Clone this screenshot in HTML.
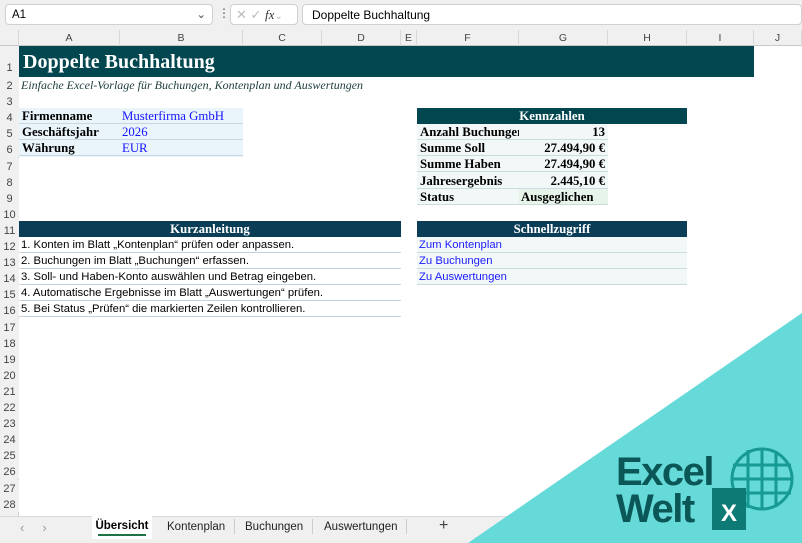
<!DOCTYPE html>
<html><head><meta charset="utf-8"><style>
*{margin:0;padding:0;box-sizing:border-box}
body{width:802px;height:543px;overflow:hidden;background:#fff;font-family:"Liberation Sans",sans-serif;position:relative}
.a{position:absolute}
.serif{font-family:"Liberation Serif",serif}
.rh{position:absolute;left:0;width:19px;text-align:center;font-size:11px;color:#444;background:#f0f0f0}
.ch{position:absolute;top:30px;height:16px;font-size:10.5px;color:#444;text-align:center;line-height:16px;border-right:1px solid #d8d8d8}
.row{position:absolute;height:16px;line-height:16px;font-size:12px;white-space:nowrap;overflow:hidden}
.row.serif{font-size:12.8px}
.k{font-size:11.3px!important}
</style></head><body>
<div class="a" style="left:0;top:0;width:802px;height:30px;background:#f0f0f0"></div>
<div class="a" style="left:5px;top:4px;width:208px;height:21px;background:#fff;border:1px solid #d0d0d0;border-radius:4px;font-size:11.5px;line-height:20px;padding-left:6px">A1<span style="position:absolute;right:6px;top:0;color:#555">⌄</span></div>
<div class="a" style="left:218px;top:6px;font-size:12px;color:#555">⋮</div>
<div class="a" style="left:230px;top:4px;width:68px;height:21px;background:#fff;border:1px solid #d0d0d0;border-radius:4px;font-size:13px;line-height:20px;color:#bbb;padding-left:5px">✕ ✓ <i style="color:#333;font-family:'Liberation Serif',serif">fx</i><span style="font-size:10px">⌄</span></div>
<div class="a" style="left:302px;top:4px;width:500px;height:21px;background:#fff;border:1px solid #d0d0d0;border-radius:4px;font-size:12px;line-height:20px;padding-left:9px">Doppelte Buchhaltung</div>
<div class="a" style="left:0;top:30px;width:802px;height:16px;background:#f0f0f0;border-bottom:1px solid #c8c8c8"></div>
<div class="ch" style="left:0;width:19px"></div>
<div class="ch" style="left:19px;width:101px">A</div>
<div class="ch" style="left:120px;width:123px">B</div>
<div class="ch" style="left:243px;width:79px">C</div>
<div class="ch" style="left:322px;width:79px">D</div>
<div class="ch" style="left:401px;width:16px">E</div>
<div class="ch" style="left:417px;width:102px">F</div>
<div class="ch" style="left:519px;width:89px">G</div>
<div class="ch" style="left:608px;width:79px">H</div>
<div class="ch" style="left:687px;width:67px">I</div>
<div class="ch" style="left:754px;width:48px">J</div>
<div class="a" style="left:0;top:46px;width:19px;height:470px;background:#f0f0f0;border-right:1px solid #d0d0d0"></div>
<div class="rh" style="top:46px;height:31px;line-height:44px">1</div>
<div id="rows"></div>
<script>
var h='';for(var i=2;i<=28;i++){var t=77+(i-2)*16.1;h+='<div class="rh" style="top:'+t+'px;height:16px;line-height:18px">'+i+'</div>';}
document.getElementById('rows').innerHTML=h;
</script>
<div class="a serif" style="left:19px;top:46px;width:735px;height:31px;background:#02474f;color:#fff;font-weight:bold;font-size:20px;line-height:32px;padding-left:4px">Doppelte Buchhaltung</div>
<div class="row serif" style="left:21px;top:77px;font-style:italic;font-size:12px!important;color:#1d3b3b">Einfache Excel-Vorlage für Buchungen, Kontenplan und Auswertungen</div>
<div class="a" style="left:19px;top:108px;width:224px;height:49px;background:#eaf4fb"></div>
<div class="row serif" style="left:19px;top:108px;width:224px;border-bottom:1px solid #c8d8e0;font-weight:bold;padding-left:3px">Firmenname<span style="position:absolute;left:103px;font-weight:normal;color:#1515ff">Musterfirma GmbH</span></div>
<div class="row serif" style="left:19px;top:124px;width:224px;border-bottom:1px solid #c8d8e0;font-weight:bold;padding-left:3px">Geschäftsjahr<span style="position:absolute;left:103px;font-weight:normal;color:#1515ff">2026</span></div>
<div class="row serif" style="left:19px;top:140px;width:224px;border-bottom:1px solid #c8d8e0;font-weight:bold;padding-left:3px">Währung<span style="position:absolute;left:103px;font-weight:normal;color:#1515ff">EUR</span></div>
<div class="row serif" style="left:417px;top:108px;width:270px;background:#02474f;color:#fff;font-weight:bold;text-align:center;line-height:17px">Kennzahlen</div>
<div class="a" style="left:417px;top:124px;width:191px;height:81px;background:#f2f8f8"></div>
<div class="a" style="left:519px;top:189px;width:89px;height:16px;background:#e6f4ea"></div>
<div class="row serif" style="left:417px;top:124px;width:191px;border-bottom:1px solid #cbdcdc;font-weight:bold;padding-left:3px"><span style="display:inline-block;width:99px;overflow:hidden">Anzahl Buchungen</span><span style="position:absolute;right:3px">13</span></div>
<div class="row serif" style="left:417px;top:140px;width:191px;border-bottom:1px solid #cbdcdc;font-weight:bold;padding-left:3px">Summe Soll<span style="position:absolute;right:3px">27.494,90 €</span></div>
<div class="row serif" style="left:417px;top:156px;width:191px;border-bottom:1px solid #cbdcdc;font-weight:bold;padding-left:3px">Summe Haben<span style="position:absolute;right:3px">27.494,90 €</span></div>
<div class="row serif" style="left:417px;top:173px;width:191px;border-bottom:1px solid #cbdcdc;font-weight:bold;padding-left:3px">Jahresergebnis<span style="position:absolute;right:3px">2.445,10 €</span></div>
<div class="row serif" style="left:417px;top:189px;width:191px;border-bottom:1px solid #cbdcdc;font-weight:bold;padding-left:3px">Status<span style="position:absolute;left:104px">Ausgeglichen</span></div>
<div class="row serif" style="left:19px;top:221px;width:382px;background:#0b3d57;color:#fff;font-weight:bold;text-align:center;line-height:17px">Kurzanleitung</div>
<div class="row k" style="left:19px;top:237px;width:382px;border-bottom:1px solid #c8d2da;padding-left:2px">1. Konten im Blatt „Kontenplan“ prüfen oder anpassen.</div>
<div class="row k" style="left:19px;top:253px;width:382px;border-bottom:1px solid #c8d2da;padding-left:2px">2. Buchungen im Blatt „Buchungen“ erfassen.</div>
<div class="row k" style="left:19px;top:269px;width:382px;border-bottom:1px solid #c8d2da;padding-left:2px">3. Soll- und Haben-Konto auswählen und Betrag eingeben.</div>
<div class="row k" style="left:19px;top:285px;width:382px;border-bottom:1px solid #c8d2da;padding-left:2px">4. Automatische Ergebnisse im Blatt „Auswertungen“ prüfen.</div>
<div class="row k" style="left:19px;top:301px;width:382px;border-bottom:1px solid #c8d2da;padding-left:2px">5. Bei Status „Prüfen“ die markierten Zeilen kontrollieren.</div>
<div class="row serif" style="left:417px;top:221px;width:270px;background:#0b3d57;color:#fff;font-weight:bold;text-align:center;line-height:17px">Schnellzugriff</div>
<div class="row k" style="left:417px;top:237px;width:270px;background:#f2f8f8;border-bottom:1px solid #cbdcdc;padding-left:2px;color:#1a1aff">Zum Kontenplan</div>
<div class="row k" style="left:417px;top:253px;width:270px;background:#f2f8f8;border-bottom:1px solid #cbdcdc;padding-left:2px;color:#1a1aff">Zu Buchungen</div>
<div class="row k" style="left:417px;top:269px;width:270px;background:#f2f8f8;border-bottom:1px solid #cbdcdc;padding-left:2px;color:#1a1aff">Zu Auswertungen</div>
<div class="a" style="left:0;top:516px;width:802px;height:27px;background:#f0f0f0;border-top:1px solid #d8d8d8"></div>
<div class="a" style="left:20px;top:520px;font-size:13px;color:#999">‹ &nbsp;&nbsp;&nbsp; ›</div>
<div class="a" style="left:92px;top:516px;width:60px;height:23px;background:#fff;font-size:11.5px;font-weight:bold;text-align:center;line-height:20px">Übersicht<div style="position:absolute;left:6px;right:6px;top:18px;height:2px;background:#1e7145"></div></div>
<div class="a" style="left:167px;top:521px;font-size:11.5px;color:#222">Kontenplan</div>
<div class="a" style="left:234px;top:519px;width:1px;height:15px;background:#ccc"></div>
<div class="a" style="left:245px;top:521px;font-size:11.5px;color:#222">Buchungen</div>
<div class="a" style="left:312px;top:519px;width:1px;height:15px;background:#ccc"></div>
<div class="a" style="left:324px;top:521px;font-size:11.5px;color:#222">Auswertungen</div>
<div class="a" style="left:406px;top:519px;width:1px;height:15px;background:#ccc"></div>
<div class="a" style="left:439px;top:517px;font-size:16px;color:#444">+</div>
<svg class="a" style="left:0;top:0" width="802" height="543">
<polygon points="802,313 802,543 468,543" fill="#66d9d9"/>
<g stroke="#179a94" stroke-width="3" fill="none">
<circle cx="762" cy="479" r="30"/>
<line x1="748" y1="450" x2="748" y2="508"/><line x1="762" y1="449" x2="762" y2="509"/><line x1="776" y1="451" x2="776" y2="507"/>
<line x1="733" y1="465" x2="791" y2="465"/><line x1="732" y1="479" x2="792" y2="479"/><line x1="733" y1="493" x2="791" y2="493"/>
</g>
<rect x="712" y="488" width="34" height="42" fill="#0d7a75"/>
<text x="729" y="521" font-family="Liberation Sans" font-weight="bold" font-size="24" fill="#fff" text-anchor="middle">X</text>
<text x="616" y="485" font-family="Liberation Sans" font-weight="bold" font-size="40" fill="#0b5656" letter-spacing="-1.5">Excel</text>
<text x="616" y="522" font-family="Liberation Sans" font-weight="bold" font-size="40" fill="#0b5656" letter-spacing="-1.5">Welt</text>
</svg>
</body></html>
